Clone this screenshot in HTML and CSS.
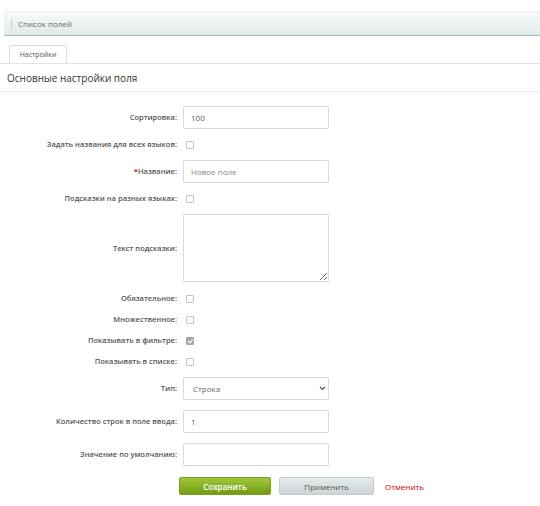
FILE: index.html
```html
<!DOCTYPE html>
<html lang="ru">
<head>
  <meta charset="UTF-8">
  <title>Настройки поля</title>
  <link rel="stylesheet" href="styles.css">
</head>
<body>
  <div class="toolbar">
    <span class="toolbar-sep"></span>
    <span class="toolbar-link">Список полей</span>
  </div>

  <div class="tabs">
    <div class="tab active">Настройки</div>
  </div>

  <div class="section-title">Основные настройки поля</div>

  <form class="edit-form">
    <div class="row">
      <label class="row-label">Сортировка:</label>
      <div class="row-field"><input class="text" type="text" value="100"></div>
    </div>
    <div class="row check-row">
      <label class="row-label">Задать названия для всех языков:</label>
      <div class="row-field"><input class="check" type="checkbox"></div>
    </div>
    <div class="row">
      <label class="row-label"><span class="req">*</span>Название:</label>
      <div class="row-field"><input class="text muted" type="text" value="Новое поле"></div>
    </div>
    <div class="row check-row">
      <label class="row-label">Подсказки на разных языках:</label>
      <div class="row-field"><input class="check" type="checkbox"></div>
    </div>
    <div class="row area-row">
      <label class="row-label">Текст подсказки:</label>
      <div class="row-field"><textarea class="text area"></textarea></div>
    </div>
    <div class="row check-row">
      <label class="row-label">Обязательное:</label>
      <div class="row-field"><input class="check" type="checkbox"></div>
    </div>
    <div class="row check-row">
      <label class="row-label">Множественное:</label>
      <div class="row-field"><input class="check" type="checkbox"></div>
    </div>
    <div class="row check-row">
      <label class="row-label">Показывать в фильтре:</label>
      <div class="row-field"><input class="check" type="checkbox" checked></div>
    </div>
    <div class="row check-row">
      <label class="row-label">Показывать в списке:</label>
      <div class="row-field"><input class="check" type="checkbox"></div>
    </div>
    <div class="row">
      <label class="row-label">Тип:</label>
      <div class="row-field">
        <div class="select-wrap">
          <select class="text select">
            <option>Строка</option>
          </select>
          <svg class="select-arrow" width="7" height="5" viewBox="0 0 7 5">
            <path d="M1 1 L3.5 3.5 L6 1" fill="none" stroke="#555" stroke-width="1.2"/>
          </svg>
        </div>
      </div>
    </div>
    <div class="row">
      <label class="row-label">Количество строк в поле ввода:</label>
      <div class="row-field"><input class="text" type="text" value="1"></div>
    </div>
    <div class="row">
      <label class="row-label">Значение по умолчанию:</label>
      <div class="row-field"><input class="text" type="text"></div>
    </div>

    <div class="buttons">
      <button type="button" class="btn btn-save">Сохранить</button>
      <button type="button" class="btn btn-apply">Применить</button>
      <a class="cancel" href="#">Отменить</a>
    </div>
  </form>
</body>
</html>
```

FILE: styles.css
```css
body {
  margin: 0;
  font-family: "Open Sans", Arial, sans-serif;
  font-size: 8px;
  color: #333;
  background: #fff;
}

/* верхняя панель */
.toolbar {
  margin: 11px 0 0 4px;
  height: 23px;
  display: flex;
  align-items: center;
  background: linear-gradient(#f8fafa, #e2e9eb);
  border-top: 1px solid #ececec;
  border-bottom: 1px solid #a9b2b5;
}
.toolbar-sep {
  width: 1px;
  height: 10px;
  background: #c3c8ca;
  margin-left: 7px;
}
.toolbar-link {
  margin-left: 6px;
  color: #666;
  font-size: 8px;
}

/* вкладки */
.tabs {
  margin-top: 9px;
  padding-left: 9px;
  border-bottom: 1px solid #e3e3e3;
  display: flex;
}
.tab {
  width: 56px;
  height: 17px;
  line-height: 17px;
  text-align: center;
  border: 1px solid #dcdcdc;
  border-bottom: none;
  border-radius: 3px 3px 0 0;
  background: #fff;
  color: #555;
  font-size: 7px;
}

.section-title {
  padding: 0 7px;
  height: 27px;
  line-height: 29px;
  font-size: 10px;
  color: #333;
  border-bottom: 1px solid #f0f0f0;
}

/* форма */
.edit-form {
  padding-top: 9px;
}
.row {
  display: grid;
  grid-template-columns: 183px 1fr;
  align-items: center;
  padding: 5px 0;
}
.row-label {
  text-align: right;
  padding-right: 6px;
  font-weight: 600;
  line-height: 11px;
  color: #555;
  font-size: 7.5px;
}
.req {
  color: #c00;
}
.area-row {
  padding-bottom: 6px;
}

.text {
  box-sizing: border-box;
  width: 146px;
  height: 23px;
  border: 1px solid #d9d9d9;
  border-radius: 2px;
  padding: 0 7px;
  font-family: inherit;
  font-size: 8px;
  color: #555;
  background: #fff;
  outline: none;
  display: block;
  margin: 0;
}
.text.muted {
  color: #888;
}
.area {
  height: 68px;
  resize: both;
}

.select-wrap {
  position: relative;
  width: 146px;
}
.select {
  appearance: none;
  -webkit-appearance: none;
  padding-left: 9px;
  color: #666;
}
.select-arrow {
  position: absolute;
  right: 3px;
  top: 9px;
}

.check {
  appearance: none;
  -webkit-appearance: none;
  box-sizing: border-box;
  width: 8px;
  height: 8px;
  margin: 0 0 0 3px;
  border: 1px solid #c4c4c4;
  border-radius: 1px;
  background: #fff;
  display: block;
  position: relative;
}
.check:checked {
  background: #a3a8aa;
  border-color: #a3a8aa;
}
.check:checked::after {
  content: "";
  position: absolute;
  left: 2px;
  top: 0;
  width: 2px;
  height: 4px;
  border: solid #fff;
  border-width: 0 1px 1px 0;
  transform: rotate(40deg);
}

/* кнопки */
.buttons {
  display: flex;
  align-items: center;
  padding: 6px 0 0 179px;
}
.btn {
  height: 18px;
  border-radius: 2px;
  font-family: inherit;
  font-size: 8px;
  cursor: pointer;
}
.btn-save {
  width: 92px;
  border: 1px solid #7d9f1f;
  background: linear-gradient(#a3c73a, #6f9c14);
  color: #fff;
  font-weight: 600;
}
.btn-apply {
  width: 95px;
  margin-left: 8px;
  border: 1px solid #c3cacd;
  background: linear-gradient(#e6ebec, #cdd5d8);
  color: #555;
}
.cancel {
  margin-left: 11px;
  color: #c00;
  text-decoration: none;
  font-size: 8px;
}
```
